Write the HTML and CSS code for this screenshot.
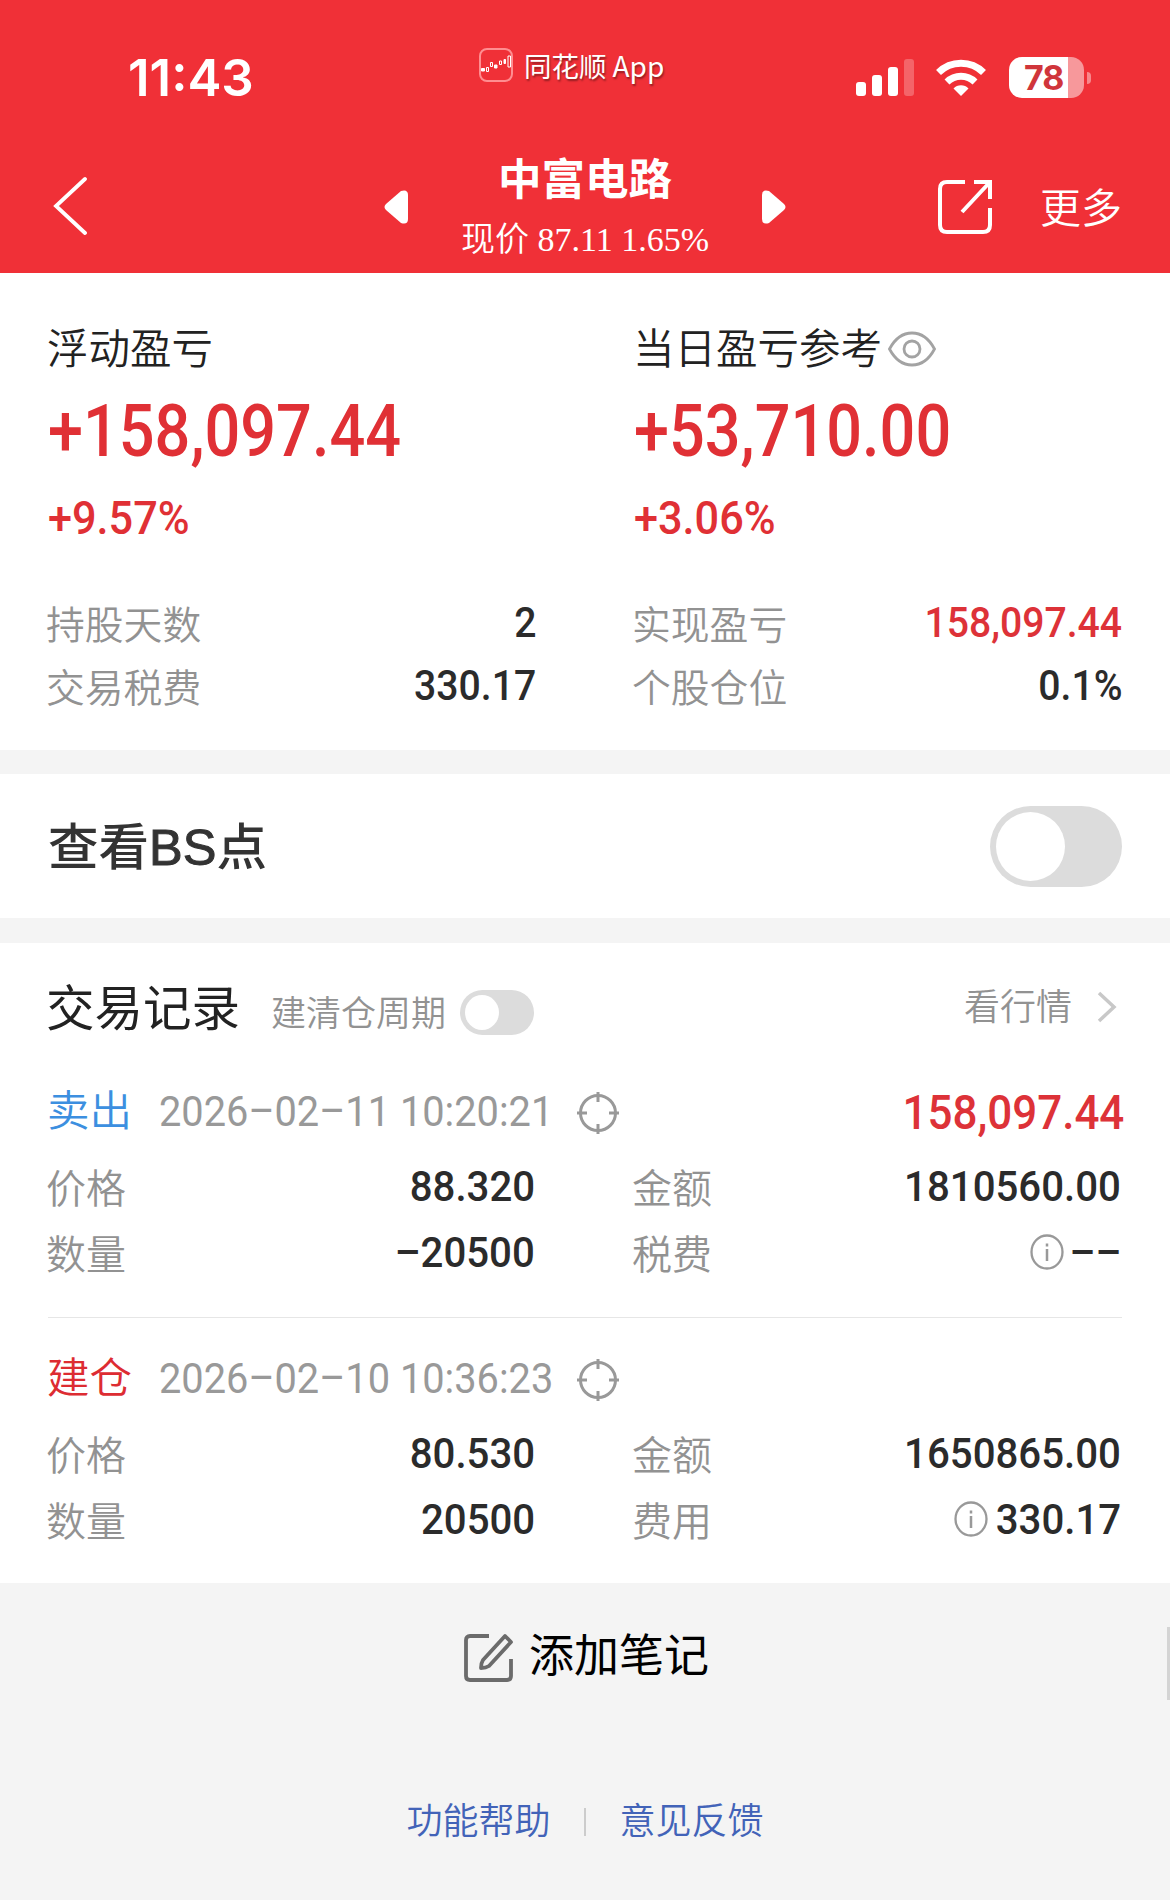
FILE: index.html
```html
<!DOCTYPE html>
<html lang="zh-CN">
<head>
  <meta charset="UTF-8" />
  <meta name="viewport" content="width=device-width, initial-scale=1.0"/>
  <title>中富电路</title>
  <link rel="stylesheet" href="styles.css">
</head>
<body>

  <header class="header">
    <div class="status-bar">
      <div class="time">11:43</div>
      <div class="app-name">
        <svg width="34" height="34" viewBox="0 0 34 34" fill="none" stroke="#fff">
          <rect x="1" y="1" width="32" height="32" rx="7" stroke="#ff8d90" stroke-width="2"/>
          <path d="M2.500 20.500h3v2.500h-3zM15.500 17h2.500v3h-2.500zM25 11.500h1.500v4H25z" fill="#fff" stroke-width="1"/>
          <path d="M7.500 19.500h2v4h-2zM11.500 14.500h2v4h-2zM20.500 13h2v3.500h-2zM29 8h2.500v11H29z" stroke-width="1"/>
        </svg>
        <span class="app-cn">同花顺</span><span class="app-en">App</span>
      </div>
      <div class="status-icons">
        <svg width="58" height="37" viewBox="0 0 58 37" fill="#fff">
          <rect x="0" y="23" width="10" height="14" rx="3"/>
          <rect x="16" y="16" width="10" height="21" rx="3"/>
          <rect x="32" y="8" width="10" height="29" rx="3"/>
          <rect x="48" y="0" width="10" height="37" rx="3" opacity=".25"/>
        </svg>
        <svg class="wifi" width="50" height="37" viewBox="0 0 50 37" fill="none" stroke="#fff" stroke-width="7">
          <path d="M2.500 13.500a32 32 0 0 1 45 0"/>
          <path d="M11 23a20 20 0 0 1 28 0"/>
          <path d="M17.500 29.500a10.500 10.500 0 0 1 15 0L25 37z" fill="#fff" stroke="none"/>
        </svg>
        <div class="battery"><span>78</span></div>
        <div class="battery-tip"></div>
      </div>
    </div>

    <div class="nav-bar">
      <svg class="back" width="34" height="60" viewBox="0 0 34 60" fill="none" stroke="#fff" stroke-width="3.800" stroke-linecap="round">
        <path d="M32 3L3 30l29 27"/>
      </svg>
      <div class="stock">
        <svg width="24" height="34" viewBox="0 0 24 34" fill="#fff">
          <path d="M17 1L2 14q-3 3 0 6l15 13q7 2 7-4V5q0-6-7-4z"/>
        </svg>
        <div class="stock-text">
          <h1>中富电路</h1>
          <p>现价 87.11 1.65%</p>
        </div>
        <svg width="24" height="34" viewBox="0 0 24 34" fill="#fff">
          <path d="M7 1l15 13q3 3 0 6L7 33q-7 2-7-4V5q0-6 7-4z"/>
        </svg>
      </div>
      <svg class="share" width="56" height="56" viewBox="0 0 56 56" fill="none" stroke="#fff" stroke-width="4">
        <path d="M28 3H10q-7 0-7 7v36q0 7 7 7h36q7 0 7-7V29"/>
        <path d="M37 3h16v17M53 3L25 33"/>
      </svg>
      <div class="more">更多</div>
    </div>
  </header>

  <section class="summary columns">
    <div>
      <div class="profit-label">浮动盈亏</div>
      <div class="profit-value"><span class="num">+158,097.44</span></div>
      <div class="profit-rate"><span class="num">+9.57%</span></div>
      <div class="row"><span class="label">持股天数</span><span class="num">2</span></div>
      <div class="row"><span class="label">交易税费</span><span class="num">330.17</span></div>
    </div>
    <div>
      <div class="profit-label">当日盈亏参考
        <svg class="eye" width="48" height="36" viewBox="0 0 48 36" fill="none" stroke="#a3a3a3" stroke-width="2.800">
          <path d="M1.500 18Q10 2 24 2t22.500 16Q38 34 24 34T1.500 18z"/>
          <circle cx="24" cy="18" r="8"/>
        </svg>
      </div>
      <div class="profit-value"><span class="num">+53,710.00</span></div>
      <div class="profit-rate"><span class="num">+3.06%</span></div>
      <div class="row"><span class="label">实现盈亏</span><span class="num red">158,097.44</span></div>
      <div class="row"><span class="label">个股仓位</span><span class="num">0.1%</span></div>
    </div>
  </section>

  <section class="bs-point">
    <h2>查看<span>BS</span>点</h2>
    <div class="switch"></div>
  </section>

  <section class="records">
    <div class="records-head">
      <h2>交易记录</h2>
      <span class="cycle">建清仓周期</span>
      <div class="switch small"></div>
      <a class="quote">看行情</a>
      <svg class="arrow" width="20" height="32" viewBox="0 0 20 32" fill="none" stroke="#c8c8c8" stroke-width="3.500">
        <path d="M2 2l15 14L2 30"/>
      </svg>
    </div>

    <div class="record">
      <div class="record-title">
        <span class="sell">卖出</span>
        <span class="date">2026–02–11 10:20:21</span>
        <svg class="target" width="42" height="42" viewBox="0 0 42 42" fill="none" stroke="#999" stroke-width="3">
          <circle cx="21" cy="21" r="17.500"/>
          <path d="M21 0v10M21 32v10M0 21h10M32 21h10"/>
        </svg>
        <span class="num red income">158,097.44</span>
      </div>
      <div class="columns">
        <div>
          <div class="row"><span class="label">价格</span><span class="num">88.320</span></div>
          <div class="row"><span class="label">数量</span><span class="num">–20500</span></div>
        </div>
        <div>
          <div class="row"><span class="label">金额</span><span class="num">1810560.00</span></div>
          <div class="row">
            <span class="label">税费</span>
            <svg class="info" width="34" height="36" viewBox="0 0 34 36" fill="none" stroke="#999" stroke-width="2.300">
              <ellipse cx="17" cy="18" rx="15.500" ry="16.500"/>
              <path d="M17 15v12M17 9.500v3" stroke-width="2.500"/>
            </svg>
            <span class="num">––</span>
          </div>
        </div>
      </div>
    </div>

    <div class="record">
      <div class="record-title">
        <span class="buy">建仓</span>
        <span class="date">2026–02–10 10:36:23</span>
        <svg class="target" width="42" height="42" viewBox="0 0 42 42" fill="none" stroke="#999" stroke-width="3">
          <circle cx="21" cy="21" r="17.500"/>
          <path d="M21 0v10M21 32v10M0 21h10M32 21h10"/>
        </svg>
      </div>
      <div class="columns">
        <div>
          <div class="row"><span class="label">价格</span><span class="num">80.530</span></div>
          <div class="row"><span class="label">数量</span><span class="num">20500</span></div>
        </div>
        <div>
          <div class="row"><span class="label">金额</span><span class="num">1650865.00</span></div>
          <div class="row">
            <span class="label">费用</span>
            <svg class="info fee" width="34" height="36" viewBox="0 0 34 36" fill="none" stroke="#999" stroke-width="2.300">
              <ellipse cx="17" cy="18" rx="15.500" ry="16.500"/>
              <path d="M17 15v12M17 9.500v3" stroke-width="2.500"/>
            </svg>
            <span class="num">330.17</span>
          </div>
        </div>
      </div>
    </div>
  </section>

  <footer>
    <div class="add-note">
      <svg width="50" height="50" viewBox="0 0 50 50" fill="none" stroke="#6b6b6b" stroke-width="3.800" stroke-linejoin="round">
        <path d="M25 3H6q-4 0-4 4v36q0 4 4 4h37q4 0 4-4V26"/>
        <path d="M41 3l6 6-22 24q-3 2-8 2 0-5 2-8z"/>
      </svg>
      <span>添加笔记</span>
    </div>
    <div class="links">
      <a>功能帮助</a>
      <i></i>
      <a>意见反馈</a>
    </div>
  </footer>

  <div class="scrollbar"></div>

</body>
</html>
```
FILE: styles.css
```css
* {
  box-sizing: border-box;
}

body {
  margin: 0;
  background: #f4f4f4;
  color: #222;
  font-family: 'Noto Sans CJK SC', sans-serif;
  font-weight: 350;
}

h1, h2, p {
  margin: 0;
}

svg {
  display: block;
  flex-shrink: 0;
}

/* header */
.header {
  height: 273px;
  background: #f03037;
  color: #fff;
}

.status-bar {
  height: 130px;
  display: flex;
  align-items: flex-start;
}

.time {
  width: 351px;
  margin: 48px 0 0 128px;
  font: 600 51px/60px Inter, sans-serif;
}

.app-name {
  width: 377px;
  margin-top: 48px;
  display: flex;
  align-items: center;
  font-size: 27.5px;
  line-height: 34px;
  font-weight: 400;
  text-shadow: 1px 2px 2px rgba(0,0,0,0.4);
}

.app-cn {
  margin-left: 11px;
}

.app-en {
  margin-left: 6px;
  font-size: 28px;
}

.status-icons {
  display: flex;
  align-items: center;
  margin-top: 57px;
  height: 41px;
}

.wifi {
  margin-left: 22px;
}

.battery {
  width: 75px;
  height: 41px;
  margin-left: 23px;
  border-radius: 13px;
  background: linear-gradient(90deg, #fff 59px, #f7989b 59px);
  color: #d0353b;
  font: 700 34px/41px Inter, sans-serif;
}

.battery span {
  margin-left: 15px;
  letter-spacing: -1px;
}

.battery-tip {
  width: 4px;
  height: 12px;
  margin-left: 3px;
  border-radius: 0 4px 4px 0;
  background: #f7888c;
}

.nav-bar {
  height: 143px;
  display: flex;
  align-items: flex-start;
}

.back {
  margin: 46px 0 0 53px;
}

.stock {
  width: 402px;
  margin-left: 297px;
  display: flex;
  justify-content: space-between;
}

.stock > svg {
  margin-top: 60px;
}

.stock-text {
  text-align: center;
  white-space: nowrap;
}

.stock-text h1 {
  margin-top: 19px;
  font-size: 43.5px;
  font-weight: 700;
  line-height: 56px;
}

.stock-text p {
  margin-top: 15px;
  font: 350 34px/40px 'Liberation Serif', 'Noto Sans CJK SC', serif;
}

.share {
  margin: 49px 0 0 151px;
}

.more {
  margin: 45px 0 0 47px;
  font-size: 41px;
  line-height: 60px;
}

/* numbers */
.num {
  display: inline-block;
  font-family: Roboto, sans-serif;
  font-weight: 500;
  transform: scaleX(0.92);
  transform-origin: left;
}

.red {
  color: #dd3238;
}

/* two column blocks */
.columns {
  display: grid;
  grid-template-columns: 487px 487px;
  column-gap: 99px;
}

.row {
  display: flex;
  align-items: center;
  justify-content: space-between;
  height: 66px;
  font-size: 43px;
  color: #2b2b2b;
}

.row .num {
  transform: scaleX(0.935);
  transform-origin: right;
}

.label {
  margin-left: -2px;
  font-size: 40px;
  color: #929292;
}

.summary {
  height: 477px;
  padding: 40px 48px 0;
  background: #fff;
}

.summary .row {
  height: 63px;
}

.summary .row .num {
  transform: translateX(1px) scaleX(0.91);
}

.summary .label {
  font-size: 38.8px;
}

.summary .profit-rate + .row {
  margin-top: 38px;
}

.profit-label {
  display: flex;
  align-items: center;
  height: 66px;
  margin-left: -1px;
  font-size: 41.5px;
}

.eye {
  margin: 6px 0 0 6px;
}

.profit-value,
.profit-rate {
  display: flex;
  align-items: center;
  color: #e03035;
}

.profit-value {
  height: 103px;
  padding-top: 1px;
  font-size: 72px;
}

.profit-value .num {
  transform: scaleX(0.875);
}

.profit-rate {
  height: 70px;
  font-size: 47px;
}

/* BS switch */
.bs-point {
  display: flex;
  align-items: center;
  justify-content: space-between;
  height: 144px;
  margin-top: 24px;
  padding: 0 48px 0 48px;
  background: #fff;
}

.bs-point h2 {
  padding-bottom: 6px;
  font-family: 'Liberation Sans', 'Noto Sans CJK SC', sans-serif;
  font-size: 50.5px;
  font-weight: 500;
  color: #333;
}

.bs-point h2 span {
  -webkit-text-stroke: 1px #333;
}

.switch {
  width: 132px;
  height: 81px;
  padding: 6px;
  border-radius: 41px;
  background: #dcdcdc;
}

.switch::before {
  content: "";
  display: block;
  width: 69px;
  height: 69px;
  border-radius: 50%;
  background: #fff;
}

/* records */
.records {
  height: 640px;
  margin-top: 25px;
  padding: 0 48px;
  background: #fff;
}

.records-head {
  display: flex;
  align-items: center;
  height: 124px;
}

.records-head h2 {
  margin-left: -2px;
  font-size: 48.5px;
  font-weight: 400;
}

.cycle {
  margin: 10px 0 0 31px;
  font-size: 35px;
  color: #929292;
}

.switch.small {
  width: 74px;
  height: 45px;
  margin: 15px 0 0 14px;
  padding: 5px;
}

.switch.small::before {
  width: 34px;
  height: 35px;
}

.quote {
  margin: -2px 0 0 auto;
  font-size: 36px;
  color: #929292;
}

.arrow {
  margin: 4px 5px 0 25px;
}

.record + .record {
  margin-top: 32px;
  padding-top: 16px;
  border-top: 1px solid #e6e6e6;
}

.record-title {
  display: flex;
  align-items: center;
  height: 86px;
}

.sell,
.buy {
  width: 112px;
  margin: -6px 0 0 -1px;
  font-size: 42.5px;
}

.sell {
  color: #3c8fe0;
}

.buy {
  color: #dd2c32;
}

.date {
  width: 418px;
  margin-top: 3px;
  font: 400 42px/50px Roboto, sans-serif;
  color: #999;
  white-space: nowrap;
  transform: scaleX(0.947);
  transform-origin: left;
}

.target {
  margin-top: 5px;
}

.income {
  margin: 4px 0 0 auto;
  font-size: 48px;
  transform: translateX(2px) scaleX(0.915);
  transform-origin: right;
}

.info {
  margin: 0 2px 0 auto;
}

.fee {
  margin-right: -1px;
}

/* footer */
.add-note {
  display: flex;
  align-items: center;
  justify-content: center;
  gap: 15px;
  height: 70px;
  margin-top: 34px;
  padding-left: 3px;
  font-size: 45px;
  font-weight: 400;
  color: #000;
}

.add-note svg {
  margin-top: 12px;
}

.links {
  display: flex;
  align-items: center;
  justify-content: center;
  height: 60px;
  margin-top: 101px;
  font-size: 36px;
  color: #4263b8;
}

.links i {
  width: 2px;
  height: 28px;
  margin: 8px 34px 0 33px;
  background: #ccc;
}

.scrollbar {
  position: absolute;
  top: 1627px;
  right: 0;
  width: 3px;
  height: 73px;
  background: #d4d4d4;
}
```
